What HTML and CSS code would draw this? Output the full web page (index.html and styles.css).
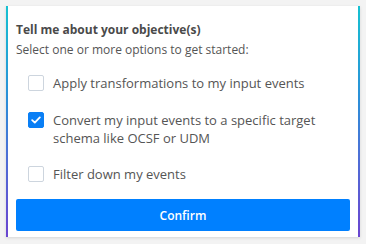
FILE: index.html
```html
<!DOCTYPE html>
<html>
<head>
<meta charset="utf-8">
<link rel="stylesheet" href="styles.css">
</head>
<body>
<div class="card">
  <div class="inner">
    <div class="title">Tell me about your objective(s)</div>
    <div class="subtitle">Select one or more options to get started:</div>
    <div class="options">
      <label class="opt">
        <span class="box"></span>
        <span class="text">Apply transformations to my input events</span>
      </label>
      <label class="opt opt-2">
        <span class="box checked"><svg width="10" height="8" viewBox="0 0 10 8"><path d="M1.2 4.2 L3.8 6.6 L8.8 1.4" fill="none" stroke="#fff" stroke-width="1.8" stroke-linecap="round" stroke-linejoin="round"/></svg></span>
        <span class="text">Convert my input events to a specific target schema like OCSF or UDM</span>
      </label>
      <label class="opt opt-3">
        <span class="box"></span>
        <span class="text">Filter down my events</span>
      </label>
    </div>
    <button class="confirm">Confirm</button>
  </div>
</div>
</body>
</html>
```
FILE: styles.css
```css
html, body { margin: 0; padding: 0; }
body {
  background: #f3f3f3;
  font-family: "Open Sans", "Liberation Sans", sans-serif;
  padding: 6px 6px 0 6px;
  width: 354px;
  height: 238px;
  box-sizing: content-box;
}
.card {
  background: linear-gradient(to bottom, #16c1d1 0%, #2b8fd8 40%, #4d6fd6 65%, #6a45d0 100%);
  padding: 0 2px;
  height: 231px;
  box-shadow: 0 1px 3px rgba(0,0,0,0.12);
}
.inner {
  background: #fff;
  height: 100%;
  box-sizing: border-box;
  padding: 15px 8px 0 8px;
  display: flex;
  flex-direction: column;
}
.title {
  font-size: 12px;
  font-weight: 700;
  color: #4a4a4a;
  line-height: 18px;
}
.subtitle {
  font-size: 12px;
  color: #555;
  line-height: 18px;
  margin-top: 2px;
}
.options {
  display: flex;
  flex-direction: column;
  margin-top: 15px;
  padding-left: 12px;
}
.opt {
  display: flex;
  align-items: flex-start;
  gap: 9px;
}
.opt-2 { margin-top: 19px; }
.opt-3 { margin-top: 18px; }
.box {
  flex: none;
  width: 14px;
  height: 14px;
  border: 1px solid #cdd5de;
  border-radius: 2px;
  background: #fff;
  margin-top: 1px;
  display: flex;
  align-items: center;
  justify-content: center;
}
.box.checked {
  background: #0a7ff5;
  border-color: #0a7ff5;
}
.text {
  font-size: 13px;
  color: #555;
  line-height: 18px;
}
.confirm {
  margin-top: 16px;
  height: 32px;
  border: none;
  border-radius: 2px;
  background: #0080ff;
  color: #fff;
  font-family: "Open Sans", "Liberation Sans", sans-serif;
  font-size: 12px;
  font-weight: 600;
  width: 100%;
}
```
